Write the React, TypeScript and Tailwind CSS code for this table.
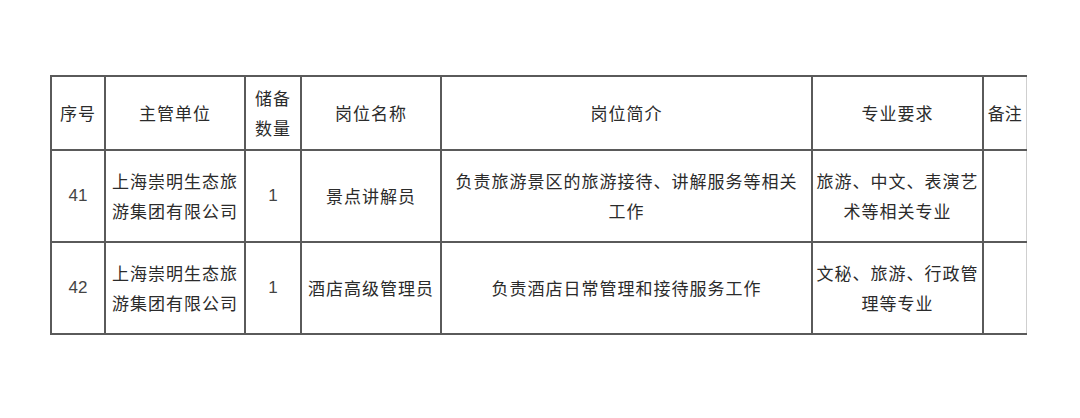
const rows = [
  {
    no: "41",
    unit: ["上海崇明生态旅", "游集团有限公司"],
    count: "1",
    name: "景点讲解员",
    desc: ["负责旅游景区的旅游接待、讲解服务等相关", "工作"],
    major: ["旅游、中文、表演艺", "术等相关专业"],
  },
  {
    no: "42",
    unit: ["上海崇明生态旅", "游集团有限公司"],
    count: "1",
    name: "酒店高级管理员",
    desc: ["负责酒店日常管理和接待服务工作"],
    major: ["文秘、旅游、行政管", "理等专业"],
  },
];

const Lines = ({ lines }: { lines: string[] }) => (
  <>
    {lines.map((l, i) => (
      <div key={i}>{l}</div>
    ))}
  </>
);

export default function App() {
  const cell =
    "border-2 border-[#5a5a5a] text-center align-middle whitespace-nowrap p-0";
  return (
    <div
      className="w-[1080px] h-[418px] bg-white pt-[75px] pl-[50px]"
      style={{ fontFamily: '"Noto Sans CJK SC", "Noto Sans", sans-serif' }}
    >
      <table className="table-fixed border-collapse w-[975px] text-[17px] leading-[30px] text-[#2b2b2b] tracking-[1px]">
        <colgroup>
          <col className="w-[54px]" />
          <col className="w-[140px]" />
          <col className="w-[56px]" />
          <col className="w-[140px]" />
          <col className="w-[371px]" />
          <col className="w-[171px]" />
          <col className="w-[43px]" />
        </colgroup>
        <thead>
          <tr className="h-[74px]">
            <th className={`${cell} font-normal`}>序号</th>
            <th className={`${cell} font-normal`}>主管单位</th>
            <th className={`${cell} font-normal`}>
              <Lines lines={["储备", "数量"]} />
            </th>
            <th className={`${cell} font-normal`}>岗位名称</th>
            <th className={`${cell} font-normal`}>岗位简介</th>
            <th className={`${cell} font-normal`}>专业要求</th>
            <th className={`${cell} font-normal border-r border-r-[#cfcfcf] tracking-normal`}>备注</th>
          </tr>
        </thead>
        <tbody>
          {rows.map((r) => (
            <tr key={r.no} className="h-[92px]">
              <td
                className={`${cell} text-[#444] tracking-normal`}
                style={{ fontFamily: '"Liberation Sans", sans-serif' }}
              >
                {r.no}
              </td>
              <td className={cell}>
                <Lines lines={r.unit} />
              </td>
              <td
                className={`${cell} text-[#444] tracking-normal`}
                style={{ fontFamily: '"Liberation Sans", sans-serif' }}
              >
                {r.count}
              </td>
              <td className={cell}>{r.name}</td>
              <td className={cell}>
                <Lines lines={r.desc} />
              </td>
              <td className={cell}>
                <Lines lines={r.major} />
              </td>
              <td className={`${cell} border-r border-r-[#cfcfcf]`}></td>
            </tr>
          ))}
        </tbody>
      </table>
    </div>
  );
}
